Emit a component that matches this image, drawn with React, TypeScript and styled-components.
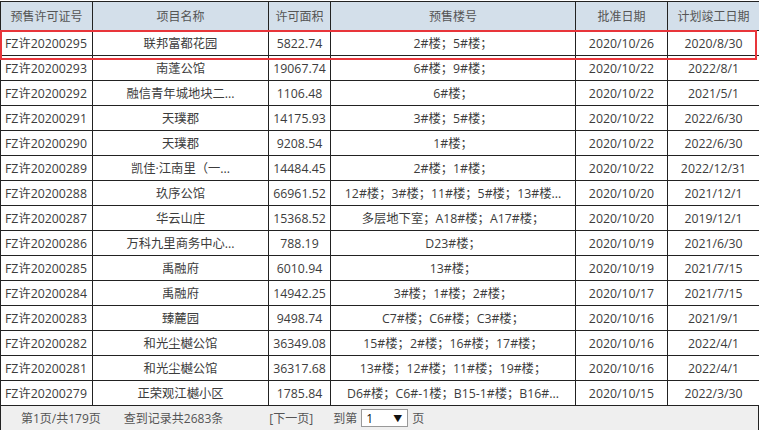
import React from "react";
import styled, { createGlobalStyle } from "styled-components";

const Global = createGlobalStyle`
  html, body { margin: 0; padding: 0; background: #fff; }
  body { font-family: "Open Sans", "Noto Sans CJK SC", sans-serif; font-size: 12px; color: #333; }
`;

const Wrap = styled.div`
  position: relative;
  width: 759px;
  padding-top: 1px;
`;

const Table = styled.table`
  width: 759px;
  border-collapse: collapse;
  table-layout: fixed;
`;

const HeadCell = styled.th`
  background: #d3dfea;
  color: #555;
  font-weight: normal;
  height: 28px;
  padding: 0;
  border: 1px solid #222;
  text-align: center;
  white-space: nowrap;
`;

const Cell = styled.td`
  height: 24px;
  padding: 0 3px;
  border: 1px solid #222;
  text-align: center;
  white-space: nowrap;
  overflow: hidden;
  color: #3c3c3c;
  font-size: 12.3px;
`;

const LeftCell = styled(Cell)`
  text-align: left;
  padding-left: 4px;
`;

const Highlight = styled.div`
  position: absolute;
  left: 0;
  top: 30px;
  width: 757px;
  height: 30px;
  box-sizing: border-box;
  border: 2px solid #e8353a;
  pointer-events: none;
`;

const Footer = styled.div`
  display: flex;
  align-items: center;
  background: #efefef;
  border: 1px solid #222;
  border-top: none;
  color: #555;
  box-sizing: border-box;
  height: 25px;
`;

const FootText = styled.span<{ $ml: number }>`
  margin-left: ${(p) => p.$ml}px;
  white-space: nowrap;
`;

const Select = styled.div`
  display: flex;
  align-items: center;
  justify-content: space-between;
  width: 47px;
  height: 18px;
  box-sizing: border-box;
  margin-left: 4px;
  margin-right: 4px;
  background: #fff;
  border: 1px solid #999;
  padding: 0 5px 0 4px;
  color: #111;
  font-size: 12px;
`;

const Arrow = styled.span`
  font-size: 9px;
  color: #111;
`;

type R = [string, string, string, string, string, string];

const rows: R[] = [
  ["FZ许20200295", "联邦富都花园", "5822.74", "2#楼；5#楼；", "2020/10/26", "2020/8/30"],
  ["FZ许20200293", "南蓬公馆", "19067.74", "6#楼；9#楼；", "2020/10/22", "2022/8/1"],
  ["FZ许20200292", "融信青年城地块二...", "1106.48", "6#楼；", "2020/10/22", "2021/5/1"],
  ["FZ许20200291", "天璞郡", "14175.93", "3#楼；5#楼；", "2020/10/22", "2022/6/30"],
  ["FZ许20200290", "天璞郡", "9208.54", "1#楼；", "2020/10/22", "2022/6/30"],
  ["FZ许20200289", "凯佳·江南里（一...", "14484.45", "2#楼；1#楼；", "2020/10/22", "2022/12/31"],
  ["FZ许20200288", "玖序公馆", "66961.52", "12#楼；3#楼；11#楼；5#楼；13#楼...", "2020/10/20", "2021/12/1"],
  ["FZ许20200287", "华云山庄", "15368.52", "多层地下室；A18#楼；A17#楼；", "2020/10/20", "2019/12/1"],
  ["FZ许20200286", "万科九里商务中心...", "788.19", "D23#楼；", "2020/10/19", "2021/6/30"],
  ["FZ许20200285", "禹融府", "6010.94", "13#楼；", "2020/10/19", "2021/7/15"],
  ["FZ许20200284", "禹融府", "14942.25", "3#楼；1#楼；2#楼；", "2020/10/17", "2021/7/15"],
  ["FZ许20200283", "臻麓园", "9498.74", "C7#楼；C6#楼；C3#楼；", "2020/10/16", "2021/9/1"],
  ["FZ许20200282", "和光尘樾公馆", "36349.08", "15#楼；2#楼；16#楼；17#楼；", "2020/10/16", "2022/4/1"],
  ["FZ许20200281", "和光尘樾公馆", "36317.68", "13#楼；12#楼；11#楼；19#楼；", "2020/10/16", "2022/4/1"],
  ["FZ许20200279", "正荣观江樾小区", "1785.84", "D6#楼；C6#-1楼；B15-1#楼；B16#...", "2020/10/15", "2022/3/30"],
];

const widths = [92, 176, 62, 245, 92, 92];
const heads = ["预售许可证号", "项目名称", "许可面积", "预售楼号", "批准日期", "计划竣工日期"];

export default function App() {
  return (
    <Wrap>
      <Global />
      <Table>
        <colgroup>
          {widths.map((w, i) => (
            <col key={i} style={{ width: w }} />
          ))}
        </colgroup>
        <thead>
          <tr>
            {heads.map((h) => (
              <HeadCell key={h}>{h}</HeadCell>
            ))}
          </tr>
        </thead>
        <tbody>
          {rows.map((r) => (
            <tr key={r[0]}>
              <LeftCell>{r[0]}</LeftCell>
              <Cell>{r[1]}</Cell>
              <Cell>{r[2]}</Cell>
              <Cell>{r[3]}</Cell>
              <Cell>{r[4]}</Cell>
              <Cell>{r[5]}</Cell>
            </tr>
          ))}
        </tbody>
      </Table>
      <Footer>
        <FootText $ml={20}>第1页/共179页</FootText>
        <FootText $ml={23}>查到记录共2683条</FootText>
        <FootText $ml={46}>[下一页]</FootText>
        <FootText $ml={20}>到第</FootText>
        <Select>
          <span>1</span>
          <Arrow>▼</Arrow>
        </Select>
        <FootText $ml={0}>页</FootText>
      </Footer>
      <Highlight />
    </Wrap>
  );
}
